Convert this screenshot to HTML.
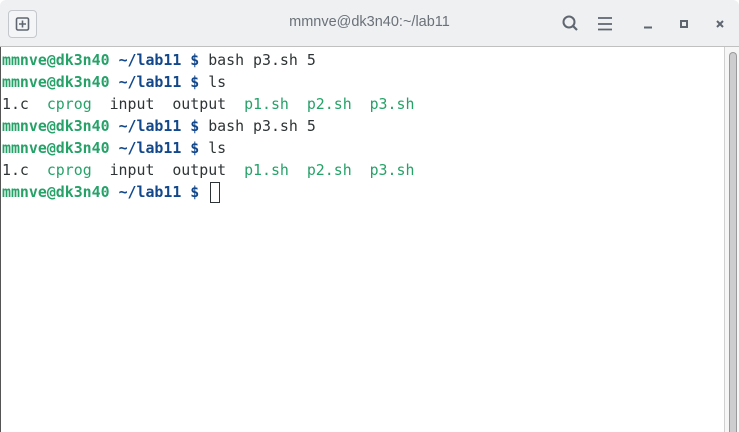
<!DOCTYPE html>
<html><head><meta charset="utf-8"><style>
*{margin:0;padding:0;box-sizing:border-box}
body{width:739px;height:432px;overflow:hidden;background:#fff;position:relative;font-family:"DejaVu Sans Mono","Liberation Mono",monospace}
.hdr{position:absolute;left:0;top:0;width:739px;height:47px;background:#eef0f2;border-bottom:1px solid #c0c0c0;border-top-left-radius:6px;border-top-right-radius:6px}
.title{position:absolute;left:0;right:0;top:14px;text-align:center;font:14.5px "Liberation Sans",sans-serif;color:#6b7178}
.btn{position:absolute;left:8px;top:10px;width:29px;height:28px;border:1px solid #c4c7cb;border-radius:4px;background:#f4f5f6}
.term{position:absolute;left:2px;top:49px;font-size:14.9px;line-height:22px;white-space:pre;color:#2e3436}
.g{color:#26a269;font-weight:bold}.b{color:#12488b;font-weight:bold}.e{color:#26a269}
.lb{position:absolute;left:0;top:47px;width:1px;height:385px;background:#555}
.sb{position:absolute;left:724px;top:47px;width:15px;height:385px;background:#f6f6f6;border-left:1px solid #d0d0d0}
.th{position:absolute;left:729px;top:52px;width:8px;height:380px;background:#cdcdcf;border:1px solid #9a9a9c;border-bottom:none;border-radius:4px 4px 0 0}
.cur{position:absolute;left:210px;top:182px;width:10px;height:21px;border:1px solid #2e3436}
</style></head><body>
<div class="hdr">
<div class="btn"><svg width="29" height="28" viewBox="0 0 29 28" style="position:absolute;left:-1px;top:-1px"><rect x="8.5" y="8" width="12" height="12" rx="1.5" fill="none" stroke="#5f6670" stroke-width="1.6"/><path d="M14.5 10.5v7M11 14h7" stroke="#5f6670" stroke-width="1.6"/></svg></div>
<div class="title">mmnve@dk3n40:~/lab11</div>
<svg width="200" height="47" viewBox="0 0 200 47" style="position:absolute;left:540px;top:0">
<circle cx="29" cy="22" r="5.5" fill="none" stroke="#5f6670" stroke-width="2"/><path d="M33 26l4 4" stroke="#5f6670" stroke-width="2.2"/>
<path d="M58 18h14M58 24h14M58 29.5h14" stroke="#5f6670" stroke-width="1.8"/>
<path d="M104 27.5h8" stroke="#5f6670" stroke-width="2"/>
<rect x="141" y="21" width="6" height="6" fill="none" stroke="#5f6670" stroke-width="2"/>
<path d="M177 21l6 6M183 21l-6 6" stroke="#5f6670" stroke-width="2"/>
</svg>
</div>
<div class="lb"></div>
<div class="term"><span class="g">mmnve@dk3n40</span> <span class="b">~/lab11 $</span> bash p3.sh 5
<span class="g">mmnve@dk3n40</span> <span class="b">~/lab11 $</span> ls
1.c  <span class="e">cprog</span>  input  output  <span class="e">p1.sh</span>  <span class="e">p2.sh</span>  <span class="e">p3.sh</span>
<span class="g">mmnve@dk3n40</span> <span class="b">~/lab11 $</span> bash p3.sh 5
<span class="g">mmnve@dk3n40</span> <span class="b">~/lab11 $</span> ls
1.c  <span class="e">cprog</span>  input  output  <span class="e">p1.sh</span>  <span class="e">p2.sh</span>  <span class="e">p3.sh</span>
<span class="g">mmnve@dk3n40</span> <span class="b">~/lab11 $</span> </div>
<div class="cur"></div>
<div class="sb"></div><div class="th"></div>
</body></html>
